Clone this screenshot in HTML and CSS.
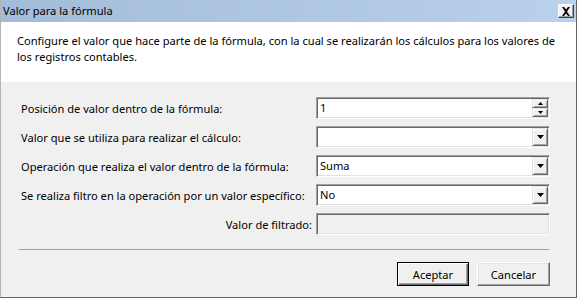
FILE: index.html
```html
<!DOCTYPE html>
<html lang="es">
<head>
<meta charset="utf-8">
<title>Valor para la fórmula</title>
<link rel="stylesheet" href="styles.css">
</head>
<body>
<div class="window">
  <div class="titlebar">
    <span class="title">Valor para la fórmula</span>
    <span class="close"><svg width="10" height="9" viewBox="0 0 10 9"><path d="M1 0h2l2 2.5L7 0h2L6 4.5 9 9H7L5 6.5 3 9H1l3-4.5z" fill="#000"/></svg></span>
  </div>
  <div class="header">
    <p class="desc">Configure el valor que hace parte de la fórmula, con la cual se realizarán los cálculos para los valores de los registros contables.</p>
  </div>
  <div class="body">
    <div class="form">
      <label class="lbl">Posición de valor dentro de la fórmula:</label>
      <div class="field">
        <span class="val">1</span>
        <span class="spin">
          <span class="sbtn"><svg width="5" height="3" viewBox="0 0 5 3"><path d="M2.5 0L5 3H0z" fill="#000"/></svg></span>
          <span class="sbtn"><svg width="5" height="3" viewBox="0 0 5 3"><path d="M0 0h5L2.5 3z" fill="#000"/></svg></span>
        </span>
      </div>

      <label class="lbl">Valor que se utiliza para realizar el cálculo:</label>
      <div class="field">
        <span class="val"></span>
        <span class="drop"><svg width="7" height="4" viewBox="0 0 7 4"><path d="M0 0h7L3.5 4z" fill="#000"/></svg></span>
      </div>

      <label class="lbl">Operación que realiza el valor dentro de la fórmula:</label>
      <div class="field">
        <span class="val">Suma</span>
        <span class="drop"><svg width="7" height="4" viewBox="0 0 7 4"><path d="M0 0h7L3.5 4z" fill="#000"/></svg></span>
      </div>

      <label class="lbl">Se realiza filtro en la operación por un valor específico:</label>
      <div class="field">
        <span class="val">No</span>
        <span class="drop"><svg width="7" height="4" viewBox="0 0 7 4"><path d="M0 0h7L3.5 4z" fill="#000"/></svg></span>
      </div>

      <label class="lbl right">Valor de filtrado:</label>
      <div class="field disabled"></div>
    </div>
    <div class="sep"></div>
    <div class="buttons">
      <button class="btn default">Aceptar</button>
      <button class="btn">Cancelar</button>
    </div>
  </div>
</div>
</body>
</html>
```

FILE: styles.css
```css
html, body {
  margin: 0;
  padding: 0;
  background: #ffffff;
}

body {
  font-family: "Noto Sans", "Open Sans", sans-serif;
  font-size: 11.1px;
  color: #000;
}

.window {
  width: 577px;
  height: 298px;
  box-sizing: border-box;
  border-left: 1px solid #b4b4b4;
  border-right: 1px solid #646464;
  border-bottom: 1px solid #646464;
  display: flex;
  flex-direction: column;
  background: #f0f0f0;
}

.titlebar {
  height: 22px;
  flex: none;
  display: flex;
  align-items: center;
  justify-content: space-between;
  padding-left: 2px;
  padding-right: 2px;
  background: linear-gradient(to right, #a3bcd9, #b9d1ea);
}

.title {
  font-size: 11.1px;
  line-height: 16px;
}

.close {
  width: 16px;
  height: 14px;
  box-sizing: border-box;
  display: flex;
  align-items: center;
  justify-content: center;
  background: #f0f0f0;
  border: 1px solid;
  border-color: #ffffff #404040 #404040 #ffffff;
  box-shadow: inset -1px -1px #a0a0a0;
}

.header {
  height: 60px;
  flex: none;
  background: #ffffff;
  box-sizing: border-box;
  padding: 11px 16px 0 16px;
}

.desc {
  margin: 0;
  line-height: 16px;
}

.body {
  flex: 1;
  display: flex;
  flex-direction: column;
  padding: 15px 0 0 0;
}

.form {
  display: grid;
  grid-template-columns: 291px 234px;
  column-gap: 4px;
  row-gap: 7px;
  padding-left: 20px;
}

.lbl {
  display: flex;
  align-items: center;
  white-space: nowrap;
}

.lbl.right {
  justify-content: flex-end;
}

.field {
  height: 22px;
  box-sizing: border-box;
  background: #ffffff;
  border: 1px solid;
  border-color: #a0a0a0 #ffffff #ffffff #a0a0a0;
  box-shadow: inset 1px 1px #696969, inset -1px -1px #e3e3e3;
  display: flex;
  align-items: center;
  padding: 1px 1px 1px 2px;
}

.field.disabled {
  background: #f0f0f0;
}

.val {
  flex: 1;
  padding-left: 1px;
  line-height: 16px;
}

.drop {
  width: 16px;
  height: 18px;
  box-sizing: border-box;
  background: #f0f0f0;
  border: 1px solid;
  border-color: #e3e3e3 #696969 #696969 #e3e3e3;
  box-shadow: inset 1px 1px #ffffff, inset -1px -1px #a0a0a0;
  display: flex;
  align-items: center;
  justify-content: center;
}

.spin {
  width: 16px;
  height: 18px;
  display: flex;
  flex-direction: column;
}

.sbtn {
  flex: 1;
  box-sizing: border-box;
  background: #f0f0f0;
  border: 1px solid;
  border-color: #e3e3e3 #696969 #696969 #e3e3e3;
  box-shadow: inset 1px 1px #ffffff, inset -1px -1px #a0a0a0;
  display: flex;
  align-items: center;
  justify-content: center;
}

.sep {
  height: 0;
  border-top: 1px solid #a0a0a0;
  margin: 14px 27px 0 18px;
}

.buttons {
  display: flex;
  justify-content: flex-end;
  gap: 8px;
  padding: 12px 26px 0 0;
}

.btn {
  font-family: inherit;
  font-size: 11.1px;
  height: 24px;
  padding: 0;
  background: #f0f0f0;
  color: #000;
  border: 1px solid;
  border-color: #ffffff #696969 #696969 #ffffff;
  box-shadow: inset -1px -1px #a0a0a0, inset 1px 1px #e3e3e3;
  width: 73px;
}

.btn.default {
  width: 72px;
  border: 1px solid #000;
  box-shadow: inset 1px 1px #ffffff, inset -1px -1px #696969, inset -2px -2px #a0a0a0;
}
```
